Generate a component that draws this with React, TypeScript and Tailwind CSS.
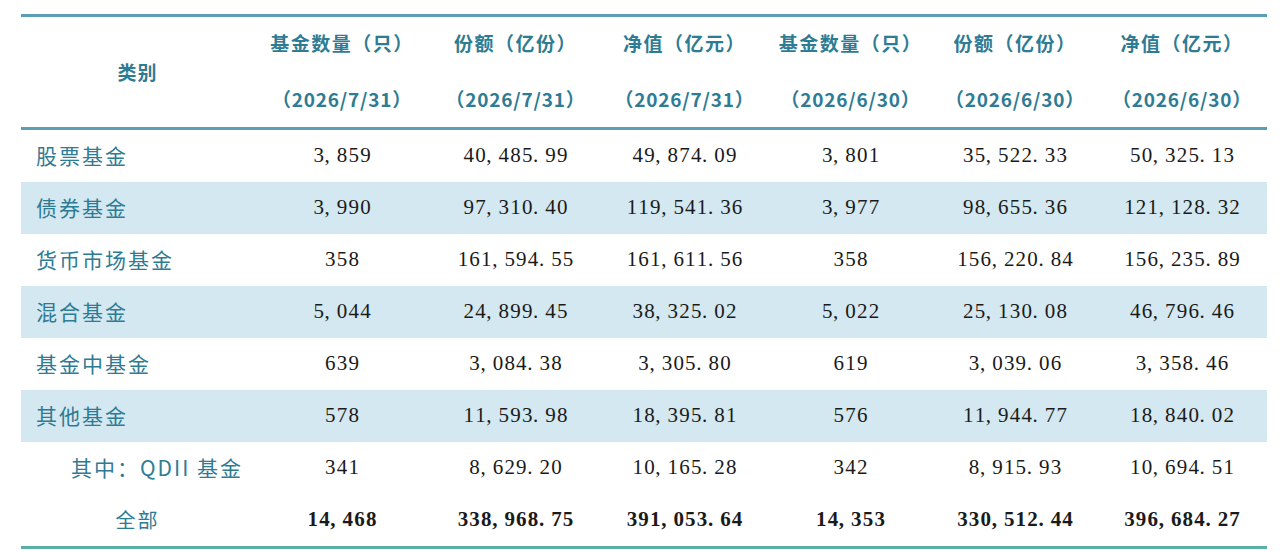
import React from "react";

const rows: { label: string; vals: string[]; band?: boolean; kind?: "sub" | "total" }[] = [
  { label: "股票基金", vals: ["3,859", "40,485.99", "49,874.09", "3,801", "35,522.33", "50,325.13"] },
  { label: "债券基金", vals: ["3,990", "97,310.40", "119,541.36", "3,977", "98,655.36", "121,128.32"], band: true },
  { label: "货币市场基金", vals: ["358", "161,594.55", "161,611.56", "358", "156,220.84", "156,235.89"] },
  { label: "混合基金", vals: ["5,044", "24,899.45", "38,325.02", "5,022", "25,130.08", "46,796.46"], band: true },
  { label: "基金中基金", vals: ["639", "3,084.38", "3,305.80", "619", "3,039.06", "3,358.46"] },
  { label: "其他基金", vals: ["578", "11,593.98", "18,395.81", "576", "11,944.77", "18,840.02"], band: true },
  { label: "其中：QDII 基金", vals: ["341", "8,629.20", "10,165.28", "342", "8,915.93", "10,694.51"], kind: "sub" },
  { label: "全部", vals: ["14,468", "338,968.75", "391,053.64", "14,353", "330,512.44", "396,684.27"], kind: "total" },
];

const heads: [string, string][] = [
  ["基金数量（只）", "（2026/7/31）"],
  ["份额（亿份）", "（2026/7/31）"],
  ["净值（亿元）", "（2026/7/31）"],
  ["基金数量（只）", "（2026/6/30）"],
  ["份额（亿份）", "（2026/6/30）"],
  ["净值（亿元）", "（2026/6/30）"],
];

const grid = "grid grid-cols-[233px_176px_171px_167px_165px_164px_170px]";
const cjk = "font-['Noto_Sans_CJK_SC',sans-serif]";
const num = "font-['Liberation_Serif',serif]";

function Num({ v }: { v: string }) {
  return (
    <span className="whitespace-nowrap">
      {v.split("").map((c, k) =>
        c === "," || c === "." ? (
          <span key={k} className="inline-block w-[11.7px] text-left">
            {c}
          </span>
        ) : (
          <span key={k} className="inline-block w-[11.7px] text-center">
            {c}
          </span>
        )
      )}
    </span>
  );
}

export default function App() {
  return (
    <div className="w-[1283px] h-[553px] bg-white pt-[14px]">
      <div className="ml-[21px] w-[1246px]">
        <div className={`${grid} border-t-[3px] border-b-[3px] border-[#5a9fb5] h-[116px]`}>
          <div className={`flex items-center justify-center ${cjk} text-[19px] font-bold tracking-[1px] text-[#2e7b94]`}>
            类别
          </div>
          {heads.map((h, i) => (
            <div key={i} className={`flex flex-col items-center ${cjk} font-bold text-[#2e7b94]`}>
              <div className="mt-[12px] h-[28px] leading-[28px] text-[19px] tracking-[1.5px]">{h[0]}</div>
              <div className="mt-[28px] h-[28px] leading-[28px] text-[19px] tracking-[0.8px]">{h[1]}</div>
            </div>
          ))}
        </div>
        {rows.map((r, i) => (
          <div key={i} className={`${grid} h-[52px] ${r.band ? "bg-[#d3e8f0]" : "bg-white"}`}>
            <div
              className={`flex items-center ${cjk} text-[#2e7b94] ${
                r.kind === "total"
                  ? "justify-center text-[20px] tracking-[2px]"
                  : r.kind === "sub"
                  ? "pl-[50px] text-[21px] tracking-[2px]"
                  : "pl-[15px] text-[21px] tracking-[2px]"
              }`}
            >
              {r.label}
            </div>
            {r.vals.map((v, j) => (
              <div
                key={j}
                className={`flex items-center justify-center ${num} text-[21px] text-[#1a1a1a] ${
                  r.kind === "total" ? "font-bold" : ""
                }`}
              >
                <Num v={v} />
              </div>
            ))}
          </div>
        ))}
        <div className="h-[3px] bg-[#5aaea8]" />
      </div>
    </div>
  );
}
